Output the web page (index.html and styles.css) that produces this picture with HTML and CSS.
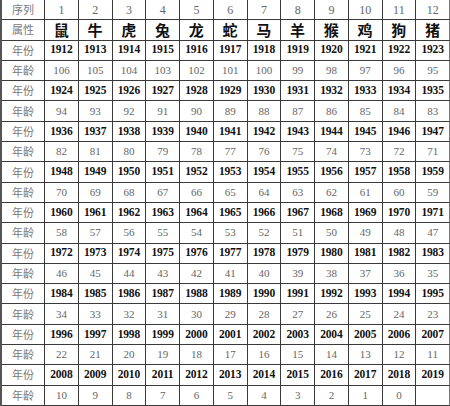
FILE: index.html
```html
<!DOCTYPE html>
<html lang="zh">
<head>
<meta charset="utf-8">
<title>生肖年份年龄对照表</title>
<link rel="stylesheet" href="styles.css">
</head>
<body>
<div class="zodiac" role="table">
<div class="row r-idx" role="row"><div class="cell label">序列</div><div class="cell">1</div><div class="cell">2</div><div class="cell">3</div><div class="cell">4</div><div class="cell">5</div><div class="cell">6</div><div class="cell">7</div><div class="cell">8</div><div class="cell">9</div><div class="cell">10</div><div class="cell">11</div><div class="cell">12</div></div>
<div class="row r-animal" role="row"><div class="cell label">属性</div><div class="cell">鼠</div><div class="cell">牛</div><div class="cell">虎</div><div class="cell">兔</div><div class="cell">龙</div><div class="cell">蛇</div><div class="cell">马</div><div class="cell">羊</div><div class="cell">猴</div><div class="cell">鸡</div><div class="cell">狗</div><div class="cell">猪</div></div>
<div class="row r-year" role="row"><div class="cell label">年份</div><div class="cell">1912</div><div class="cell">1913</div><div class="cell">1914</div><div class="cell">1915</div><div class="cell">1916</div><div class="cell">1917</div><div class="cell">1918</div><div class="cell">1919</div><div class="cell">1920</div><div class="cell">1921</div><div class="cell">1922</div><div class="cell">1923</div></div>
<div class="row r-age" role="row"><div class="cell label">年龄</div><div class="cell">106</div><div class="cell">105</div><div class="cell">104</div><div class="cell">103</div><div class="cell">102</div><div class="cell">101</div><div class="cell">100</div><div class="cell">99</div><div class="cell">98</div><div class="cell">97</div><div class="cell">96</div><div class="cell">95</div></div>
<div class="row r-year" role="row"><div class="cell label">年份</div><div class="cell">1924</div><div class="cell">1925</div><div class="cell">1926</div><div class="cell">1927</div><div class="cell">1928</div><div class="cell">1929</div><div class="cell">1930</div><div class="cell">1931</div><div class="cell">1932</div><div class="cell">1933</div><div class="cell">1934</div><div class="cell">1935</div></div>
<div class="row r-age" role="row"><div class="cell label">年龄</div><div class="cell">94</div><div class="cell">93</div><div class="cell">92</div><div class="cell">91</div><div class="cell">90</div><div class="cell">89</div><div class="cell">88</div><div class="cell">87</div><div class="cell">86</div><div class="cell">85</div><div class="cell">84</div><div class="cell">83</div></div>
<div class="row r-year" role="row"><div class="cell label">年份</div><div class="cell">1936</div><div class="cell">1937</div><div class="cell">1938</div><div class="cell">1939</div><div class="cell">1940</div><div class="cell">1941</div><div class="cell">1942</div><div class="cell">1943</div><div class="cell">1944</div><div class="cell">1945</div><div class="cell">1946</div><div class="cell">1947</div></div>
<div class="row r-age" role="row"><div class="cell label">年龄</div><div class="cell">82</div><div class="cell">81</div><div class="cell">80</div><div class="cell">79</div><div class="cell">78</div><div class="cell">77</div><div class="cell">76</div><div class="cell">75</div><div class="cell">74</div><div class="cell">73</div><div class="cell">72</div><div class="cell">71</div></div>
<div class="row r-year" role="row"><div class="cell label">年份</div><div class="cell">1948</div><div class="cell">1949</div><div class="cell">1950</div><div class="cell">1951</div><div class="cell">1952</div><div class="cell">1953</div><div class="cell">1954</div><div class="cell">1955</div><div class="cell">1956</div><div class="cell">1957</div><div class="cell">1958</div><div class="cell">1959</div></div>
<div class="row r-age" role="row"><div class="cell label">年龄</div><div class="cell">70</div><div class="cell">69</div><div class="cell">68</div><div class="cell">67</div><div class="cell">66</div><div class="cell">65</div><div class="cell">64</div><div class="cell">63</div><div class="cell">62</div><div class="cell">61</div><div class="cell">60</div><div class="cell">59</div></div>
<div class="row r-year" role="row"><div class="cell label">年份</div><div class="cell">1960</div><div class="cell">1961</div><div class="cell">1962</div><div class="cell">1963</div><div class="cell">1964</div><div class="cell">1965</div><div class="cell">1966</div><div class="cell">1967</div><div class="cell">1968</div><div class="cell">1969</div><div class="cell">1970</div><div class="cell">1971</div></div>
<div class="row r-age" role="row"><div class="cell label">年龄</div><div class="cell">58</div><div class="cell">57</div><div class="cell">56</div><div class="cell">55</div><div class="cell">54</div><div class="cell">53</div><div class="cell">52</div><div class="cell">51</div><div class="cell">50</div><div class="cell">49</div><div class="cell">48</div><div class="cell">47</div></div>
<div class="row r-year" role="row"><div class="cell label">年份</div><div class="cell">1972</div><div class="cell">1973</div><div class="cell">1974</div><div class="cell">1975</div><div class="cell">1976</div><div class="cell">1977</div><div class="cell">1978</div><div class="cell">1979</div><div class="cell">1980</div><div class="cell">1981</div><div class="cell">1982</div><div class="cell">1983</div></div>
<div class="row r-age" role="row"><div class="cell label">年龄</div><div class="cell">46</div><div class="cell">45</div><div class="cell">44</div><div class="cell">43</div><div class="cell">42</div><div class="cell">41</div><div class="cell">40</div><div class="cell">39</div><div class="cell">38</div><div class="cell">37</div><div class="cell">36</div><div class="cell">35</div></div>
<div class="row r-year" role="row"><div class="cell label">年份</div><div class="cell">1984</div><div class="cell">1985</div><div class="cell">1986</div><div class="cell">1987</div><div class="cell">1988</div><div class="cell">1989</div><div class="cell">1990</div><div class="cell">1991</div><div class="cell">1992</div><div class="cell">1993</div><div class="cell">1994</div><div class="cell">1995</div></div>
<div class="row r-age" role="row"><div class="cell label">年龄</div><div class="cell">34</div><div class="cell">33</div><div class="cell">32</div><div class="cell">31</div><div class="cell">30</div><div class="cell">29</div><div class="cell">28</div><div class="cell">27</div><div class="cell">26</div><div class="cell">25</div><div class="cell">24</div><div class="cell">23</div></div>
<div class="row r-year" role="row"><div class="cell label">年份</div><div class="cell">1996</div><div class="cell">1997</div><div class="cell">1998</div><div class="cell">1999</div><div class="cell">2000</div><div class="cell">2001</div><div class="cell">2002</div><div class="cell">2003</div><div class="cell">2004</div><div class="cell">2005</div><div class="cell">2006</div><div class="cell">2007</div></div>
<div class="row r-age" role="row"><div class="cell label">年龄</div><div class="cell">22</div><div class="cell">21</div><div class="cell">20</div><div class="cell">19</div><div class="cell">18</div><div class="cell">17</div><div class="cell">16</div><div class="cell">15</div><div class="cell">14</div><div class="cell">13</div><div class="cell">12</div><div class="cell">11</div></div>
<div class="row r-year" role="row"><div class="cell label">年份</div><div class="cell">2008</div><div class="cell">2009</div><div class="cell">2010</div><div class="cell">2011</div><div class="cell">2012</div><div class="cell">2013</div><div class="cell">2014</div><div class="cell">2015</div><div class="cell">2016</div><div class="cell">2017</div><div class="cell">2018</div><div class="cell">2019</div></div>
<div class="row r-age" role="row"><div class="cell label">年龄</div><div class="cell">10</div><div class="cell">9</div><div class="cell">8</div><div class="cell">7</div><div class="cell">6</div><div class="cell">5</div><div class="cell">4</div><div class="cell">3</div><div class="cell">2</div><div class="cell">1</div><div class="cell">0</div><div class="cell"></div></div>
</div>
</body>
</html>
```
FILE: styles.css
```css
html, body {
  margin: 0;
  padding: 0;
  background: #fff;
}

.zodiac {
  display: flex;
  flex-direction: column;
  width: 450px;
  height: 406px;
  box-sizing: border-box;
  border-left: 2px solid #555;
  font-family: "Liberation Serif", "Noto Sans CJK SC", serif;
  color: #222;
}

.row {
  display: flex;
  flex: 1 1 0;
  min-height: 0;
}

.cell {
  display: flex;
  align-items: center;
  justify-content: center;
  flex: 1 1 0;
  min-width: 0;
  box-sizing: border-box;
  border-right: 1px solid #3a3a3a;
  border-bottom: 1px solid #3a3a3a;
  line-height: 1;
  overflow: hidden;
  white-space: nowrap;
}

.cell:last-child {
  border-right-color: #777;
}

.cell.label {
  flex: 0 0 43px;
  font-family: "Noto Sans CJK SC", sans-serif;
  font-weight: 400;
  font-size: 11px;
  color: #7a7a7a;
}

.r-idx .cell {
  font-size: 12px;
  color: #666;
}

.r-animal .cell {
  font-family: "Noto Sans CJK SC", sans-serif;
  font-size: 15px;
  font-weight: 700;
  color: #111;
}

.r-year .cell {
  font-size: 11.5px;
  font-weight: 700;
  color: #111;
  letter-spacing: -0.2px;
}

.r-age .cell {
  font-size: 11px;
  color: #666;
}

.r-animal .cell.label,
.r-year .cell.label,
.r-age .cell.label,
.r-idx .cell.label {
  font-family: "Noto Sans CJK SC", sans-serif;
  font-weight: 400;
  font-size: 11px;
  color: #7a7a7a;
  letter-spacing: 0;
}
```
